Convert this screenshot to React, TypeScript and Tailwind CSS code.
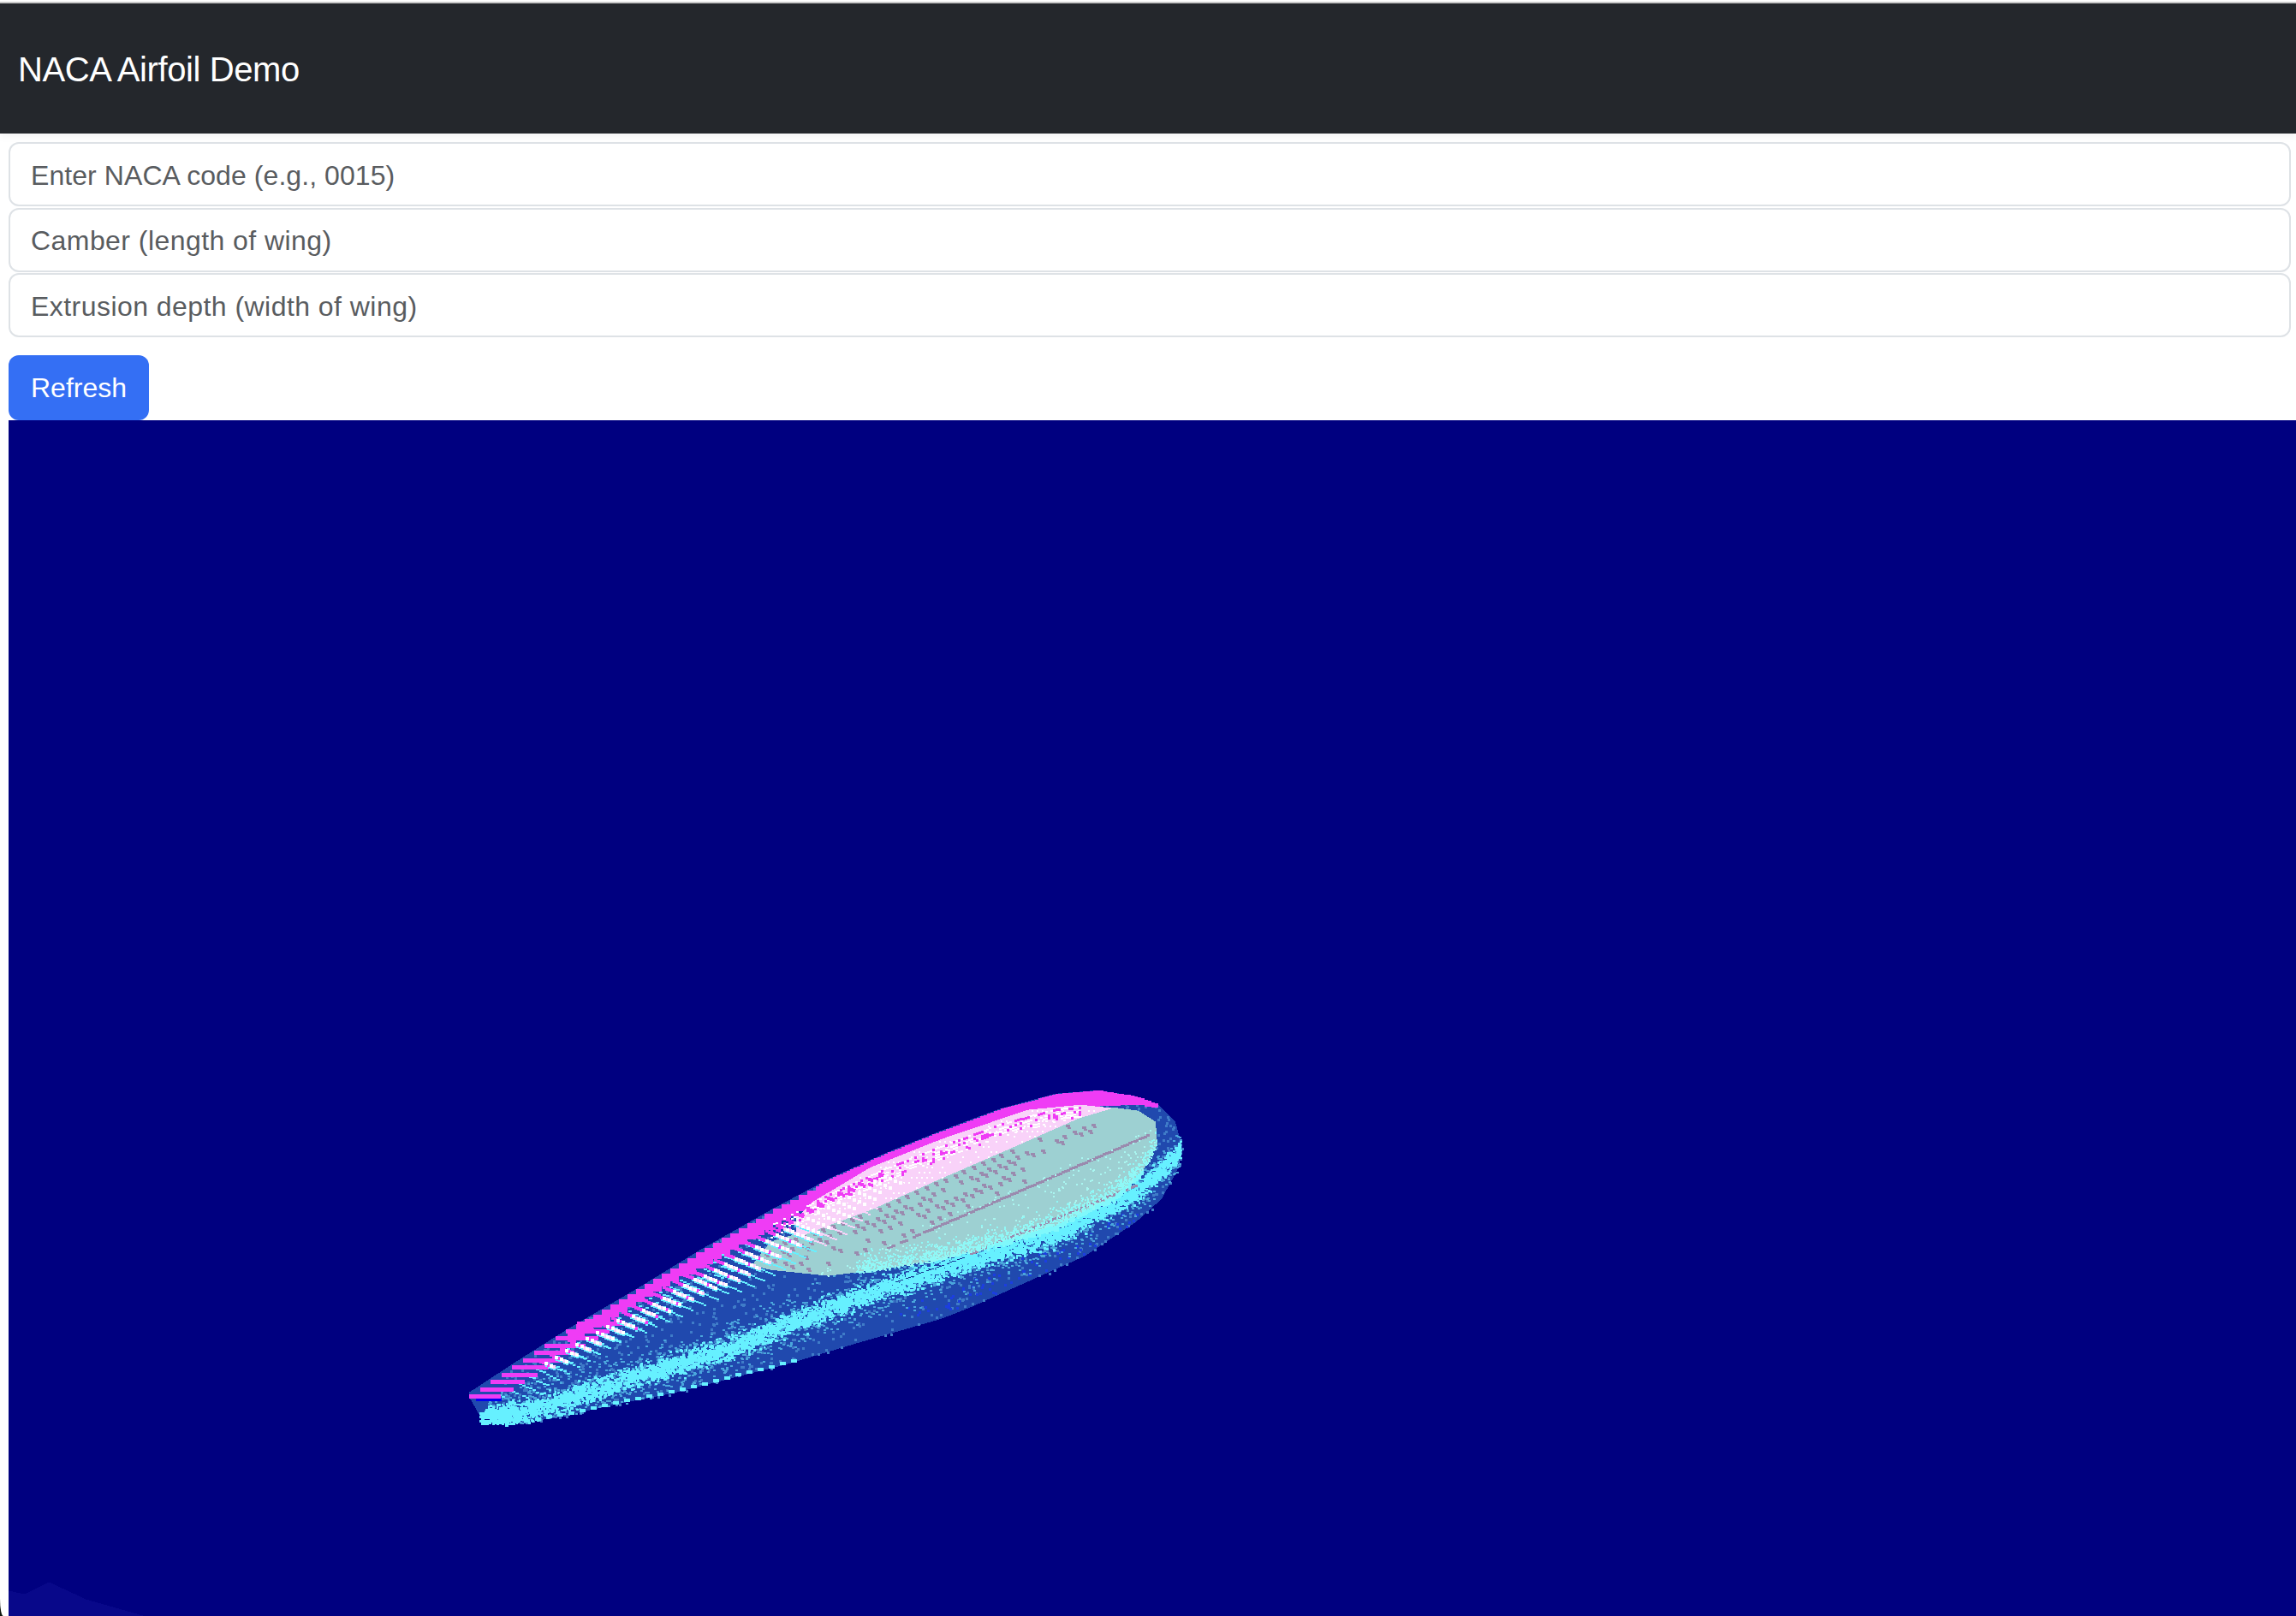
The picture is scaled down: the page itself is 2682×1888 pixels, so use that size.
import { useMemo } from 'react';

type Pt = [number, number];

const TOP: Pt[] = [[548, 1626], [603, 1590], [663, 1552], [747, 1503], [817, 1460], [900, 1413], [967, 1377], [1033, 1347], [1100, 1320], [1167, 1295], [1233, 1277], [1283, 1273], [1327, 1280], [1353, 1290], [1373, 1310], [1381, 1340]];
const BOTTOM: Pt[] = [[548, 1632], [560, 1653], [587, 1663], [610, 1662], [653, 1655], [720, 1640], [787, 1627], [853, 1610], [920, 1593], [1000, 1569], [1100, 1540], [1133, 1527], [1200, 1497], [1267, 1467], [1327, 1427], [1357, 1400], [1377, 1363], [1381, 1340]];
const BAND: Pt[] = [[565, 1652], [620, 1645], [753, 1603], [853, 1573], [933, 1540], [1033, 1503], [1133, 1470], [1233, 1440], [1333, 1387], [1377, 1343]];
const FACE_TOP: Pt[] = [[878, 1478], [900, 1450], [933, 1440], [1017, 1410], [1100, 1373], [1183, 1337], [1260, 1303], [1300, 1293], [1330, 1297], [1350, 1310]];
const FACE: Pt[] = [...FACE_TOP, [1352, 1337], [1333, 1370], [1300, 1400], [1233, 1433], [1167, 1453], [1100, 1470], [1033, 1482], [967, 1490], [900, 1483]];
const PINK: Pt[] = [[930, 1422], [950, 1403], [1017, 1363], [1100, 1330], [1200, 1296], [1262, 1290], [1300, 1294], [1260, 1306], [1183, 1340], [1100, 1376], [1017, 1413], [960, 1434], [930, 1446]];

function mulberry(seed: number) {
  return () => {
    seed = (seed + 0x6d2b79f5) | 0;
    let t = Math.imul(seed ^ (seed >>> 15), 1 | seed);
    t = (t + Math.imul(t ^ (t >>> 7), 61 | t)) ^ t;
    return ((t ^ (t >>> 14)) >>> 0) / 4294967296;
  };
}

function along(path: Pt[], x: number) {
  for (let i = 1; i < path.length; i++) {
    if (x <= path[i][0]) {
      const [x0, y0] = path[i - 1];
      const [x1, y1] = path[i];
      return y0 + ((y1 - y0) * (x - x0)) / (x1 - x0 || 1);
    }
  }
  return path[path.length - 1][1];
}

function inside(poly: Pt[], x: number, y: number) {
  let hit = false;
  for (let i = 0, j = poly.length - 1; i < poly.length; j = i++) {
    const [xi, yi] = poly[i];
    const [xj, yj] = poly[j];
    if (yi > y !== yj > y && x < ((xj - xi) * (y - yi)) / (yj - yi) + xi) hit = !hit;
  }
  return hit;
}

const points = (p: Pt[]) => p.map((q) => q.join(',')).join(' ');

type Layer = { fill: string; d: string[] };

// points of the render, one <path> per colour so the DOM stays small
function buildLayers() {
  const rnd = mulberry(1234);
  const gauss = () => (rnd() + rnd() + rnd() + rnd() - 2) * 1.2;
  const under: Layer[] = [];
  const over: Layer[] = [];
  const layer = (list: Layer[], fill: string) => {
    const l: Layer = { fill, d: [] };
    list.push(l);
    return (x: number, y: number, w: number, h: number) =>
      l.d.push(`M${Math.round(x)} ${Math.round(y)}h${Math.round(w)}v${Math.round(h)}h${-Math.round(w)}z`);
  };
  const inBody = (x: number, y: number) => y > along(TOP, x) && y < along(BOTTOM, x);

  // speckle over the dark underside
  const speck = layer(under, '#3f7cc8');
  for (let i = 0; i < 1300; i++) {
    const x = 580 + rnd() * 800;
    const y = along(TOP, x) + rnd() * (along(BOTTOM, x) - along(TOP, x));
    if (inBody(x, y)) speck(x, y, 3, 3);
  }
  const deep = layer(under, '#1c3ee0');
  for (let i = 0; i < 70; i++) {
    const x = 1050 + rnd() * 280;
    const y = along(BOTTOM, x) - 4 - rnd() * 30;
    if (inBody(x, y)) deep(x, y, 3, 3);
  }

  // bright streak along the lower surface
  const halo = layer(under, '#4aa6dc');
  const cyan = layer(under, '#66f0ff');
  for (let i = 0; i < 7500; i++) {
    const x = 570 + rnd() * 808;
    const wide = i % 3 === 0;
    const y = along(BAND, x) + gauss() * (wide ? 20 : 9);
    if (!inBody(x, y)) continue;
    if (wide) halo(x, y, 3, 2);
    else cyan(x, y, 2 + rnd() * 2, 2 + rnd());
  }
  // dashes on the bottom edge and the blob at the tip
  for (let x = 612; x < 930; x += 13) cyan(x, along(BOTTOM, x) - 5, 7, 4);
  for (let i = 0; i < 230; i++) cyan(560 + rnd() * 46, 1645 + rnd() * 16, 3, 3);
  for (let i = 0; i < 26; i++) {
    for (let j = 0; j < 7; j++) {
      if (rnd() < 0.75) cyan(578 + i * 12 + j * 4, 1626 - i * 7.4 + j * 2 + rnd() * 2, 4, 2);
    }
  }

  const navy = layer(under, '#14308f');
  for (let x = 1043; x < 1127; x += 3) {
    if (x % 12 < 9) navy(x, 1497 - ((x - 1043) * 30) / 84, 3, 1);
  }

  // magenta edge: loose bars near the trailing edge, then a solid strip
  layer(under, '#0000f0')(556, 1632, 30, 4);
  const magenta = layer(under, '#ef3cf5');
  for (let i = 0; i < 11; i++) magenta(548 + 12.6 * i, 1628 - 8.5 * i, 37 + 1.6 * i, 5);
  for (let x = 663; x < 1350; x += x < 950 ? 10 : 4) {
    const y = along(TOP, x);
    magenta(x, y, x < 950 ? 10 : 4, x < 1280 ? (x < 800 ? 15 : 19) : Math.max(3, 19 - (x - 1280) / 5));
  }

  // detail painted on the pale face
  const mauve = layer(over, '#9a8aae');
  const light = layer(over, '#a9f6f0');
  const lighter = layer(over, '#8ff8f6');
  const pinkDot = layer(over, '#ffffff');
  for (let x = 935; x < 1290; x += 6) {
    for (let y = 1290; y < 1450; y += 6) {
      if (inside(PINK, x, y) && !inside(FACE, x, y) && rnd() < 0.5) pinkDot(x + ((y / 6) % 2) * 3, y, 2, 2);
    }
  }
  // staggered mauve marks just under the pale edge, thinning out towards the ridge
  for (let x = 892; x < 1270; x += 11) {
    const rows = x > 1180 ? 3 : 6;
    for (let k = 0; k < rows; k++) {
      const mx = x + (k % 2) * 6 + k * 2 + rnd() * 2;
      const my = along(FACE_TOP, x) + 3 + k * 7;
      if (!inside(FACE, mx, my) || rnd() < (x > 1180 ? 0.4 : 0.05 + k * 0.1)) continue;
      mauve(mx, my, 5, 3);
      mauve(mx + 2, my + 3, 4, 2);
    }
  }
  for (let x = 1033; x < 1342; x += 3) {
    if (x > 1075 || x % 15 < 9) mauve(x, 1457 - ((x - 1033) * 134) / 309, 4, 3);
  }
  for (let x = 1133; x < 1327; x += 3) mauve(x, 1462 - ((x - 1133) * 80) / 194, 4, 3);
  for (let i = 0; i < 900; i++) {
    const x = 900 + rnd() * 450;
    const y = 1300 + rnd() * 190;
    const ridge = 1457 - ((x - 1033) * 134) / 309;
    if (inside(FACE, x, y) && y > ridge - 8) light(x, y, 2, 2);
  }
  const lowEdge: Pt[] = [...FACE.slice(9).reverse(), [1353, 1310]];
  for (let i = 0; i < 1500; i++) {
    const x = 1000 + rnd() * 350;
    const y = along(lowEdge, x) - Math.abs(gauss()) * 14;
    if (inside(FACE, x, y)) lighter(x, y, 2, 2);
  }
  // bright rim under the pale face
  const rim = layer(over, '#7ff8fb');
  for (let x = 1150; x < 1335; x += 3) {
    if (rnd() < 0.85) rim(x, along(lowEdge, x) - 3, 3, 4 + rnd() * 4);
  }

  // broken white / magenta fringe below the magenta strip
  const fringeW = layer(over, '#ffffff');
  const fringeM = layer(over, '#ef3cf5');
  for (let x = 900; x < 1262; x += 3) {
    const y = along(TOP, x) + 19;
    for (let k = 0; k < 5; k++) {
      const r = rnd();
      const fy = y + k * 3 - (k === 0 ? 2 : 0);
      if (r < 0.42) fringeW(x, fy, 3, 2);
      else if (r < 0.42 + (0.4 - k * 0.07)) fringeM(x, fy, 3, 3);
    }
  }

  // diagonal white / magenta ribs, lying over both the body and the pale face
  const ribC = layer(over, '#66f0ff');
  const ribM = layer(over, '#ef3cf5');
  const pale = layer(over, '#f9d2f9');
  const white = layer(over, '#ffffff');
  for (let x = 630; x < 1030; x += 12) {
    const sy = along(TOP, x) + (x < 800 ? 15 : 19);
    const len = x < 930 ? 26 + Math.min(34, (x - 630) / 6) : 60 - (x - 930) / 4;
    for (let k = 0; k < len; k += 3) {
      const px = x + k;
      const py = sy + k * 0.42;
      const f = k / len;
      if (f < 0.15) ribM(px, py, 4, 4);
      else if (f < 0.68) {
        (k % 6 === 0 ? white : x < 900 && k % 9 === 0 ? ribM : pale)(px, py, 4, 4);
        if (x < 930) ribC(px + 1, py + 4, 3, 2);
      } else if (x < 900) ribC(px, py + 1, 3, 2);
      else pale(px, py, 3, 2);
    }
  }

  return { under, over };
}

function Airfoil() {
  const { under, over } = useMemo(buildLayers, []);
  return (
    <svg viewBox="10 490 2672 1398" className="block w-full h-full" shapeRendering="crispEdges">
      <polygon points="10,1858 28,1862 57,1848 100,1868 170,1888 10,1888" fill="#08088a" />
      <polygon points={points([...TOP, ...[...BOTTOM].reverse()])} fill="#2049ae" />
      {under.map((l, i) => (
        <path key={i} d={l.d.join('')} fill={l.fill} />
      ))}
      <polygon points={points(FACE)} fill="#9dd0d2" />
      <polygon points={points(PINK)} fill="#f9d2f9" />
      {over.map((l, i) => (
        <path key={i} d={l.d.join('')} fill={l.fill} />
      ))}
    </svg>
  );
}

const FIELDS = [
  { label: 'Enter NACA code (e.g., 0015)', tracking: 'tracking-[0.07px]' },
  { label: 'Camber (length of wing)', tracking: 'tracking-[0.44px]' },
  { label: 'Extrusion depth (width of wing)', tracking: 'tracking-[0.45px]' },
];

export default function App() {
  return (
    <div className="w-[2682px] h-[1888px] bg-[#10180f] overflow-hidden font-['Liberation_Sans',Arial,sans-serif]">
      <div className="h-full bg-white rounded-bl-[4px_20px] flex flex-col overflow-hidden pt-[2px]">
        <nav className="h-[154px] shrink-0 flex items-center pt-[2px] px-[21px] bg-[#24272c] border-t-2 border-[#c9c9c9] shadow-[0_4px_8px_rgba(0,0,0,0.05)]">
          <span className="text-[40px] tracking-[-0.4px] text-white">NACA Airfoil Demo</span>
        </nav>
        <form className="shrink-0 flex flex-col items-start gap-[1.5px] pt-[10px] pl-[10px] pr-[6px]">
          {FIELDS.map((f) => (
            <input
              key={f.label}
              placeholder={f.label}
              className={`h-[75px] w-full px-[24px] pt-[3px] text-[32px] bg-white border-2 border-[#dee2e6] rounded-[12px] outline-none placeholder:text-[#595c5f] ${f.tracking}`}
            />
          ))}
          <button
            type="button"
            className="mt-[19px] h-[76px] w-[164px] rounded-[12px] bg-[#346ff4] text-[32px] text-white"
          >
            Refresh
          </button>
        </form>
        <div className="ml-[10px] flex-1 min-h-0 bg-[#000080]">
          <Airfoil />
        </div>
      </div>
    </div>
  );
}
